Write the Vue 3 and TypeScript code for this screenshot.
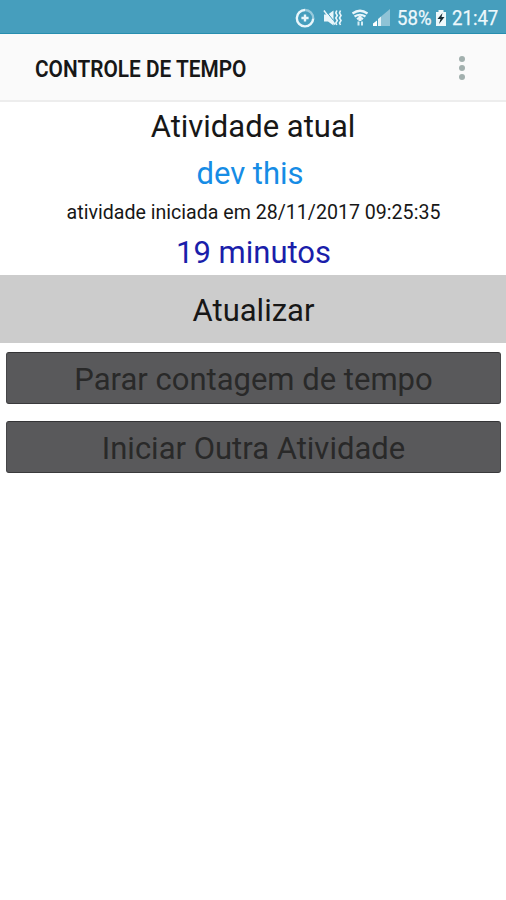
<script setup lang="ts">
const activity = 'dev this'
const startedAt = '28/11/2017 09:25:35'
const minutes = 19
</script>

<template>
  <main class="screen">
    <header class="status">
      <svg class="icons" viewBox="0 0 100 24" width="100" height="24" aria-hidden="true">
        <g fill="none" stroke="#e9f6fb" stroke-width="2.4">
          <path d="M12 4A8.200 8.200 0 1 0 20.200 12.500" />
          <path d="M12 4A8.200 8.200 0 0 1 20.200 12.500" stroke-opacity=".5" />
          <path d="M12 8.400v7.200M8.400 12h7.200" />
        </g>
        <path d="M31 8.500h4l5.500-4v15l-5.500-4h-4z" fill="#e9f6fb" />
        <path d="M31 4.500l11 14" stroke="#e9f6fb" stroke-width="1.700" />
        <path d="M32.500 4.500l8 10" stroke="#469ebd" stroke-width="1" />
        <path d="M43.800 4.500l-1 2.500 1.500 2.500-1.500 2.500 1.500 2.500-1.500 2.500 1 2M47.500 4.500l-1 2.500 1.500 2.500-1.500 2.500 1.500 2.500-1.500 2.500 1 2" fill="none" stroke="#e9f6fb" stroke-width="1.600" />
        <g fill="none" stroke="#e9f6fb" stroke-width="2.200">
          <path d="M59.500 7.500q7.500-5.500 15 0M61.500 10.500q5.500-3.500 11 0M64 13.200q3-2 6 0" />
          <path d="M67 10v5" stroke-width="3" />
        </g>
        <path d="M64.500 15.500h2v4h-2zM68 15.500h2v4h-2z" fill="#d5edf5" />
        <path d="M80 20v-2.500l4-3V20z" fill="#fff" />
        <path d="M85 20v-7l3-2.500V20z" fill="#e3f2f7" />
        <path d="M88 20V10.500l9-7.500v17z" fill="#8fc3d6" />
      </svg>
      <span class="battery-text"><span class="narrow">58%</span></span>
      <svg class="battery" viewBox="0 0 12 18" width="12" height="18" aria-hidden="true">
        <path d="M3.500 1h5v2H11v14H1V3h2.500z" fill="#eef8fb" />
        <path d="M7.500 4L2.500 10h3L4 15l5.500-7h-3z" fill="#172c34" />
      </svg>
      <span class="clock"><span class="narrow">21:47</span></span>
    </header>

    <nav class="toolbar">
      <h1><span>CONTROLE DE TEMPO</span></h1>
      <button class="more" aria-label="Menu"><i></i><i></i><i></i></button>
    </nav>

    <section class="summary">
      <h2>Atividade atual</h2>
      <p class="activity">{{ activity }}</p>
      <p class="started">atividade iniciada em {{ startedAt }}</p>
      <p class="minutes">{{ minutes }} minutos</p>
    </section>

    <button class="refresh">Atualizar</button>
    <div class="actions">
      <button class="action stop">Parar contagem de tempo</button>
      <button class="action start">Iniciar Outra Atividade</button>
    </div>
  </main>
</template>

<style>
body { background: #fff; }
</style>

<style scoped>
* { box-sizing: border-box; }
.screen { width: 506px; height: 900px; background: #fff; font-family: Roboto, "Liberation Sans", sans-serif; overflow: hidden; }
.status { height: 34px; display: flex; align-items: center; padding: 2px 7px 0 293px; background: #469ebd; border-bottom: 1px solid #278eaf; color: #edf8fc; font-size: 20px; line-height: 32px; white-space: nowrap; }
.icons { flex: none; }
.battery-text { width: 35px; margin-left: 4px; }
.narrow { display: inline-block; transform: scaleX(.93); transform-origin: left center; -webkit-text-stroke: .25px currentColor; }
.battery { flex: none; margin-left: 3px; }
.clock { width: 46px; margin-left: 5px; }
.toolbar { height: 68px; display: flex; align-items: center; justify-content: space-between; padding: 0 38px 0 35px; background: #fafafa; border-bottom: 2px solid #ededed; }
h1 { margin: 0; width: 212px; font-size: 23px; line-height: 32px; font-weight: 600; color: #171717; white-space: nowrap; padding-top: 6px; }
h1 span { display: inline-block; transform: scaleX(.905); transform-origin: left center; }
.more { width: 12px; height: 36px; padding: 7px 3px 3px; border: 0; background: none; display: flex; flex-direction: column; gap: 3px; }
.more i { width: 6px; height: 6px; flex: none; border-radius: 50%; background: #a2b0ae; }
.summary { height: 173px; padding-top: 1px; text-align: center; white-space: nowrap; color: #171717; }
h2, p { margin: 0; font-weight: 400; }
h2 { font-size: 31px; line-height: 47px; }
.activity { font-size: 31px; line-height: 47px; color: #168ce5; padding-right: 6px; }
.started { font-size: 19.6px; line-height: 31px; padding-left: 1px; }
.minutes { font-size: 31px; line-height: 47px; padding: 1px 0 0 1px; color: #1a1eaa; }
button { font-family: inherit; }
.refresh { display: block; width: 100%; height: 68px; padding: 2px 0 0 1px; border: 0; background: #ccc; color: #171717; font-size: 31px; }
.actions { display: grid; gap: 17px; padding: 9px 5px 0 6px; }
.action { width: 100%; height: 52px; padding: 3px 0 0; border: 1px solid #464648; border-top-color: #343436; border-bottom-color: #3a3a3c; border-radius: 3px; background: #59595b; color: #292929; font-size: 31px; white-space: nowrap; }
</style>
